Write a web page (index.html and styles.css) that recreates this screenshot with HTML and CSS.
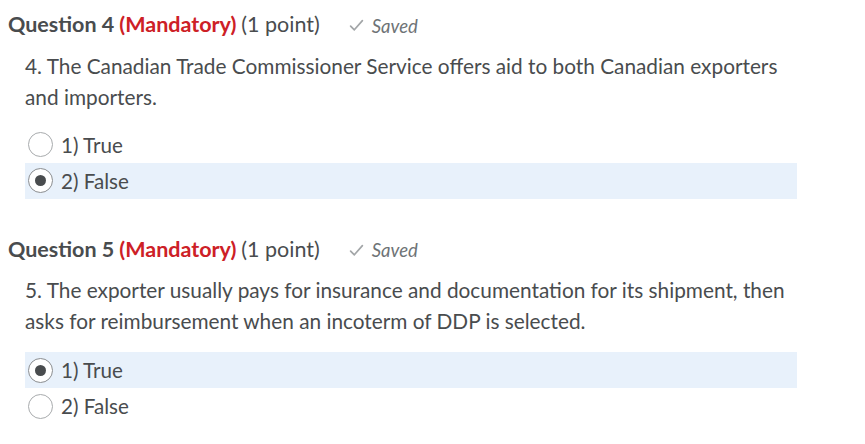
FILE: index.html
```html
<!DOCTYPE html>
<html>
<head>
<meta charset="utf-8">
<link rel="stylesheet" href="styles.css">
</head>
<body>
<div class="page">
  <section class="question">
    <h2 class="q-head">
      <span class="q-title">Question 4</span>
      <span class="q-mand">(Mandatory)</span>
      <span class="q-points">(1 point)</span>
      <span class="q-saved"><svg class="check" viewBox="0 0 14 12" width="15" height="13"><path d="M1.5 6.5 L5 10 L12.5 1.5" fill="none" stroke="#a3a6a8" stroke-width="1.6" stroke-linecap="round" stroke-linejoin="round"/></svg>Saved</span>
    </h2>
    <div class="q-text">4. The Canadian Trade Commissioner Service offers aid to both Canadian exporters and importers.</div>
    <div class="options">
      <label class="opt"><span class="radio"></span><span class="opt-text">1) True</span></label>
      <label class="opt selected"><span class="radio checked"></span><span class="opt-text">2) False</span></label>
    </div>
  </section>
  <section class="question">
    <h2 class="q-head">
      <span class="q-title">Question 5</span>
      <span class="q-mand">(Mandatory)</span>
      <span class="q-points">(1 point)</span>
      <span class="q-saved"><svg class="check" viewBox="0 0 14 12" width="15" height="13"><path d="M1.5 6.5 L5 10 L12.5 1.5" fill="none" stroke="#a3a6a8" stroke-width="1.6" stroke-linecap="round" stroke-linejoin="round"/></svg>Saved</span>
    </h2>
    <div class="q-text">5. The exporter usually pays for insurance and documentation for its shipment, then asks for reimbursement when an incoterm of DDP is selected.</div>
    <div class="options">
      <label class="opt selected"><span class="radio checked"></span><span class="opt-text">1) True</span></label>
      <label class="opt"><span class="radio"></span><span class="opt-text">2) False</span></label>
    </div>
  </section>
</div>
</body>
</html>
```
FILE: styles.css
```css
html, body {
  margin: 0;
  padding: 0;
  background: #ffffff;
}
body {
  font-family: Lato, "Open Sans", sans-serif;
  color: #494c4e;
}
.page {
  padding: 8px 0 0 8px;
  width: 800px;
}
.question {
  display: flex;
  flex-direction: column;
}
.question + .question {
  margin-top: 34px;
}
.q-head {
  margin: 0;
  font-size: 21.5px;
  font-weight: 400;
  line-height: 32px;
  display: flex;
  align-items: baseline;
  gap: 5px;
}
.q-title {
  font-weight: 700;
}
.q-mand {
  font-weight: 700;
  color: #cd2026;
}
.q-saved {
  margin-left: 24px;
  font-size: 18.5px;
  font-style: italic;
  color: #6e7376;
  display: inline-flex;
  align-items: center;
  gap: 8px;
}
.check {
  display: block;
}
.q-text {
  margin: 8px 0 0 17px;
  font-size: 20.8px;
  line-height: 31px;
  width: 775px;
}
.options {
  margin: 15px 0 0 17px;
  display: flex;
  flex-direction: column;
}
.question + .question .options {
  margin-top: 16px;
}
.opt {
  display: flex;
  align-items: center;
  height: 36px;
  width: 772px;
  padding-left: 3px;
  box-sizing: border-box;
  gap: 8px;
  font-size: 20.6px;
}
.opt.selected {
  background: #e8f1fb;
}
.radio {
  width: 25px;
  height: 25px;
  border-radius: 50%;
  border: 1px solid #a8abad;
  background: #fff;
  box-sizing: border-box;
  display: flex;
  align-items: center;
  justify-content: center;
}
.radio.checked {
  border-color: #8a8d90;
}
.radio.checked::after {
  content: "";
  width: 11px;
  height: 11px;
  border-radius: 50%;
  background: #494c4e;
}
```
